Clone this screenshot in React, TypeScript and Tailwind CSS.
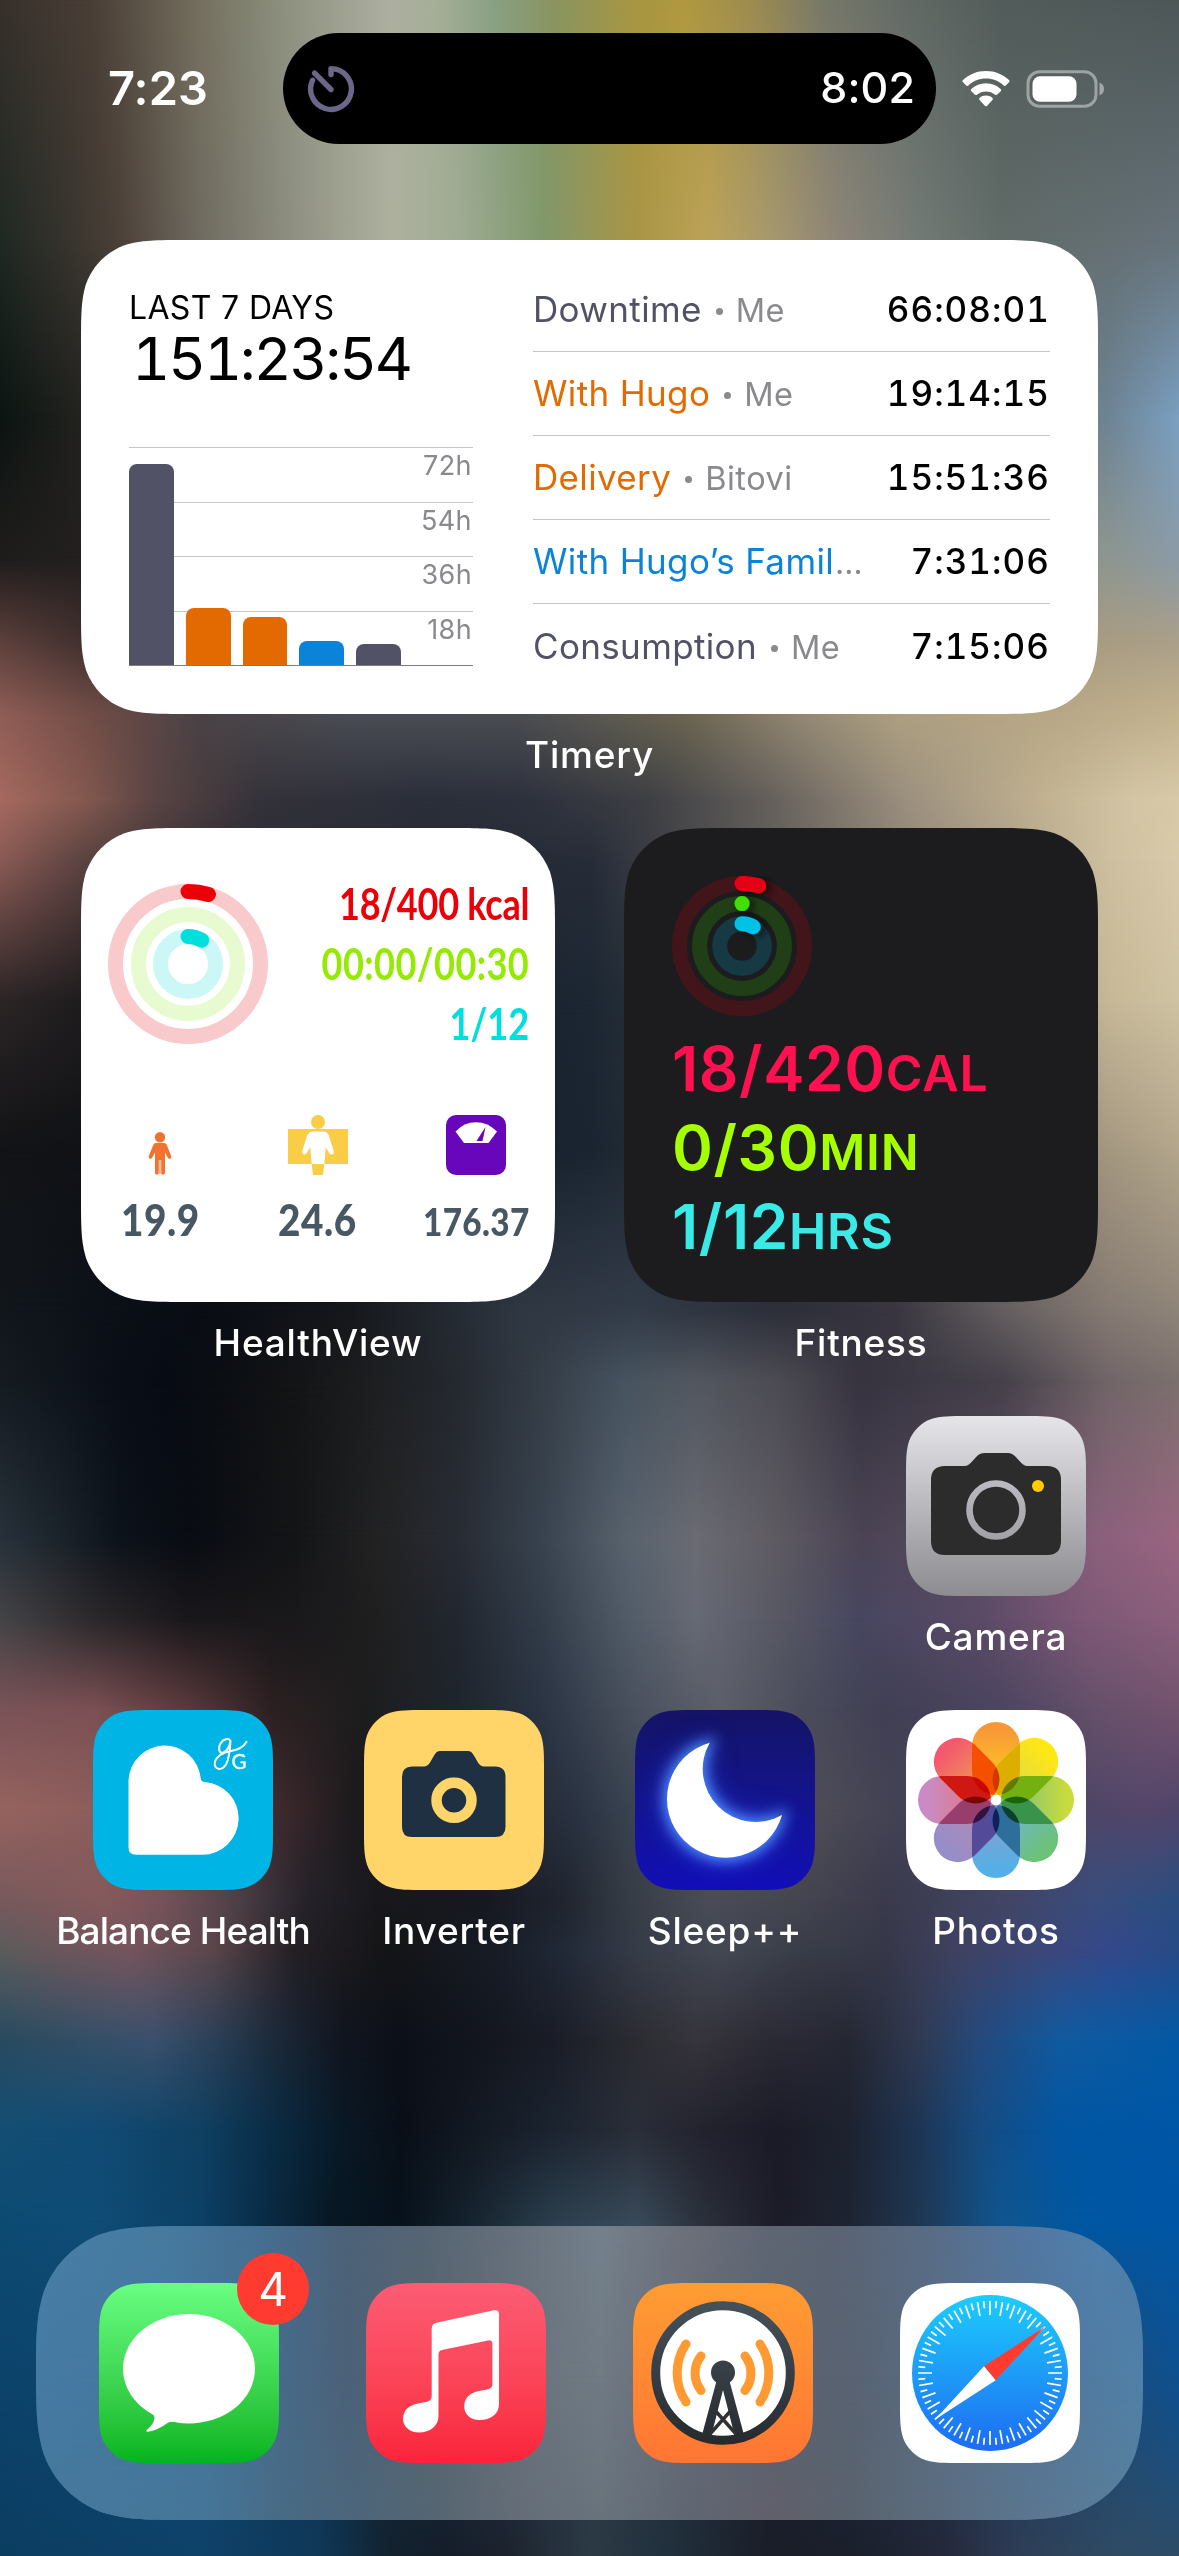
import React from "react";

type Row = { y: number; colors: string };

/* Wallpaper colour rows; neighbouring rows are cross-faded vertically. */
const WALLPAPER: Row[] = [
  { y: 0, colors: "#37302b 0%,#4a3f37 8%,#75705f 17%,#8d907f 24%,#adafa0 33%,#a5af98 37%,#88a083 42%,#8a9560 47%,#a89642 54%,#b0993f 58%,#9c8b50 64%,#777868 70%,#656c67 76%,#525c5a 85%,#4d5758 100%" },
  { y: 240, colors: "#1f2923 0%,#34322c 5%,#4b4038 10%,#6f6b60 17%,#8f9082 25%,#aeb09e 33%,#9fab93 39%,#80986c 46%,#a89545 54%,#bca258 60%,#a8996c 65%,#8d8578 71%,#727a75 78%,#616b68 85%,#66727a 100%" },
  { y: 420, colors: "#0b1411 0%,#23221f 7%,#4b4b46 30%,#6a6a60 60%,#6e8494 94%,#7ba0c2 100%" },
  { y: 560, colors: "#1f1d1c 0%,#231f1f 7%,#4b4b46 30%,#7a7568 60%,#8e9690 94%,#8b9aa6 100%" },
  { y: 640, colors: "#5c3f3b 0%,#40302e 7%,#4b4b46 30%,#7a7568 60%,#a89c82 94%,#aa9f8a 100%" },
  { y: 714, colors: "#8f5d56 0%,#704c46 8%,#4a4245 17%,#4a4d55 30%,#4b4d52 44%,#6a6450 58%,#938874 68%,#ac9f80 76%,#b8a888 90%,#c3b28e 100%" },
  { y: 800, colors: "#a5695f 0%,#84594f 7%,#5a4443 13%,#34323a 22%,#2a2e39 36%,#2c303c 44%,#3e3f44 55%,#635e5a 65%,#9c907f 77%,#c0b090 88%,#d3c5a5 96%,#d8c9a8 100%" },
  { y: 860, colors: "#8a5a54 0%,#5c4341 7%,#2c2c34 20%,#262c38 50%,#8a8072 75%,#cdbf9f 94%,#d8caaa 100%" },
  { y: 1000, colors: "#2c2526 0%,#1f1c1e 7%,#16181e 25%,#1c2733 50%,#5a5550 75%,#c6b897 94%,#cfc2a2 100%" },
  { y: 1150, colors: "#121316 0%,#101216 7%,#101318 25%,#1a2531 50%,#4a4745 75%,#a49780 94%,#b3a68c 100%" },
  { y: 1310, colors: "#12171c 0%,#0c1118 8%,#090c14 17%,#16181c 30%,#2f3742 44%,#323b48 54%,#2c2e38 66%,#393640 76%,#645e60 85%,#857a72 94%,#8f8478 100%" },
  { y: 1380, colors: "#151b21 0%,#0c1119 8%,#070b13 14%,#111315 24%,#1d1f21 32%,#252930 39%,#353d47 46%,#465360 53%,#52575f 59%,#4c4b53 66%,#36333f 73%,#45404a 85%,#716568 94%,#7c706e 100%" },
  { y: 1540, colors: "#28313a 0%,#1c242b 5%,#0d131b 10%,#090c13 16%,#141517 25%,#222223 32%,#282c34 39%,#38434f 46%,#57626d 53%,#6a6b73 59%,#5e5a62 66%,#4b4455 73%,#5a4a60 82%,#8a607c 93%,#9a6480 100%" },
  { y: 1620, colors: "#454447 0%,#2c282b 8%,#1a171b 16%,#19181a 25%,#1f1f20 32%,#222730 39%,#323c49 46%,#505a67 53%,#666a74 59%,#575863 66%,#474660 73%,#5a4a66 83%,#7d5876 92%,#8a5f7c 100%" },
  { y: 1710, colors: "#7a5358 0%,#7c5054 8%,#5b3a3c 16%,#2c2022 23%,#1d1d1e 31%,#1f252c 39%,#2a3443 46%,#4a515e 54%,#5c5f6a 61%,#4a4c5b 68%,#403f54 75%,#4c4560 85%,#65506a 93%,#73526e 100%" },
  { y: 1810, colors: "#96635f 0%,#8c5e5c 8%,#633f42 17%,#3c292d 24%,#1c1a1c 30%,#1b1c1f 38%,#2a3343 49%,#3f4854 55%,#53555e 62%,#4d4b56 70%,#424254 76%,#494564 88%,#54466a 97%,#50456a 100%" },
  { y: 1900, colors: "#77595c 0%,#85595c 9%,#75525a 14%,#4e4048 20%,#25222a 26%,#18181c 32%,#161820 41%,#20252f 48%,#353b44 53%,#494c56 60%,#44454f 68%,#3a3a4c 75%,#424564 85%,#384c7c 93%,#2a4d80 100%" },
  { y: 1950, colors: "#5a5c5c 0%,#6a575b 5%,#75555d 11%,#5a464b 18%,#241f25 25%,#141517 33%,#171c26 42%,#222a38 48%,#363c48 54%,#434853 61%,#393d48 68%,#363748 75%,#3f4160 81%,#3d4778 88%,#34488a 94%,#284b86 100%" },
  { y: 2040, colors: "#284a5f 0%,#344f68 8%,#3a506d 13%,#2b4058 18%,#1c2b3b 23%,#11151f 29%,#0c1018 34%,#14171f 42%,#1a1d27 47%,#2b2c32 54%,#36343c 59%,#2b2b35 65%,#252733 72%,#303a52 78%,#24497c 83%,#105a9f 90%,#0359a6 100%" },
  { y: 2130, colors: "#144e74 0%,#114b75 8%,#0f4062 17%,#0a2c45 23%,#091926 29%,#0a0f17 34%,#141a24 41%,#1b2430 47%,#2a2e38 54%,#22222d 60%,#1b1b27 66%,#1d222f 72%,#1d3554 78%,#164b80 83%,#0256a2 90%,#0057a6 100%" },
  { y: 2225, colors: "#0d4a72 0%,#0f4c76 8%,#0c4065 17%,#092a42 23%,#071825 28%,#07121c 34%,#16242f 40%,#2c3f4e 47%,#394a5a 54%,#2a2f39 60%,#1c1c28 66%,#1e2432 72%,#1f3752 78%,#10568f 85%,#0057a2 92%,#0056a5 100%" },
  { y: 2400, colors: "#0c426a 0%,#0d4870 17%,#10263a 33%,#2c3a46 50%,#1c1f2a 66%,#1e3656 83%,#1a4c7c 96%,#104f8c 100%" },
  { y: 2556, colors: "#0c3d61 0%,#0f4169 17%,#0f3858 27%,#13222f 33%,#151d2a 38%,#1c232e 43%,#2b3a45 50%,#20303c 57%,#1a1e29 65%,#1a1f2b 72%,#24283a 80%,#2e3c55 86%,#2f4a62 94%,#2e4c66 100%" },
];

const DOCK: Row[] = [
  { y: 0, colors: "#4880a8 0%,#467a9f 12%,#456f93 20%,#4c6278 28%,#566573 35%,#66707c 43%,#74818c 51%,#6c707b 59%,#5f6673 66%,#5a6473 72%,#5a6b84 80%,#5377a0 89%,#4f80ad 96%,#4c7ba8 100%" },
  { y: 150, colors: "#457aa3 0%,#45779d 12%,#466e90 20%,#4b6178 28%,#5a6670 37%,#6b747d 45%,#707a84 51%,#656a75 59%,#5b6470 66%,#596373 74%,#587088 83%,#52759a 90%,#5080a8 100%" },
  { y: 294, colors: "#47789c 0%,#45769a 15%,#486b85 22%,#4c657a 29%,#556672 36%,#636c77 43%,#68737c 51%,#5f6672 59%,#61606b 67%,#59646f 74%,#5c6d80 82%,#5b768f 90%,#58809c 100%" },
];

function ColorMesh({ rows }: { rows: Row[] }) {
  return (
    <div className="absolute inset-0">
      {rows.map((row, i) => {
        const prev = i === 0 ? row.y : rows[i - 1].y;
        const next = i === rows.length - 1 ? row.y + 1 : rows[i + 1].y;
        const mask = i === 0 ? undefined : `linear-gradient(to bottom, transparent 0, #000 ${row.y - prev}px)`;
        return (
          <div
            key={row.y}
            className="absolute inset-x-0"
            style={{
              top: prev,
              height: next - prev,
              backgroundImage: `linear-gradient(to right, ${row.colors})`,
              maskImage: mask,
              WebkitMaskImage: mask,
            }}
          />
        );
      })}
    </div>
  );
}

/* Continuous-corner rounded rectangle. */
function squircle(w: number, h: number, r: number): string {
  const ah = Math.min(1.52866 * r, w / 2);
  const av = Math.min(1.52866 * r, h / 2);
  const p = (n: number) => (n * r).toFixed(2);
  const X = (n: number) => (w - n * r).toFixed(2);
  const Y = (n: number) => (h - n * r).toFixed(2);
  const k1 = Math.min(1.0885, av / r);
  return [
    `M${ah} 0 L${w - ah} 0`,
    `C${X(1.0885)} 0 ${X(0.8684)} 0 ${X(0.6315)} ${p(0.0749)}`,
    `C${X(0.3728)} ${p(0.1691)} ${X(0.1691)} ${p(0.3728)} ${X(0.0749)} ${p(0.6315)}`,
    `C${w} ${p(0.8684)} ${w} ${p(k1)} ${w} ${av}`,
    `L${w} ${h - av}`,
    `C${w} ${Y(k1)} ${w} ${Y(0.8684)} ${X(0.0749)} ${Y(0.6315)}`,
    `C${X(0.1691)} ${Y(0.3728)} ${X(0.3728)} ${Y(0.1691)} ${X(0.6315)} ${Y(0.0749)}`,
    `C${X(0.8684)} ${h} ${X(1.0885)} ${h} ${w - ah} ${h}`,
    `L${ah} ${h}`,
    `C${p(1.0885)} ${h} ${p(0.8684)} ${h} ${p(0.6315)} ${Y(0.0749)}`,
    `C${p(0.3728)} ${Y(0.1691)} ${p(0.1691)} ${Y(0.3728)} ${p(0.0749)} ${Y(0.6315)}`,
    `C0 ${Y(0.8684)} 0 ${Y(k1)} 0 ${h - av}`,
    `L0 ${av}`,
    `C0 ${p(k1)} 0 ${p(0.8684)} ${p(0.0749)} ${p(0.6315)}`,
    `C${p(0.1691)} ${p(0.3728)} ${p(0.3728)} ${p(0.1691)} ${p(0.6315)} ${p(0.0749)}`,
    `C${p(0.8684)} 0 ${p(1.0885)} 0 ${ah} 0 Z`,
  ].join(" ");
}

const clip = (w: number, h: number, r: number) => ({ clipPath: `path("${squircle(w, h, r)}")` });

function Label({ children, className = "tracking-[0.8px]" }: { children: React.ReactNode; className?: string }) {
  return (
    <div className={`mt-[19px] h-[44px] whitespace-nowrap text-[37px] font-medium leading-[44px] text-white ${className}`}>
      {children}
    </div>
  );
}

/* ---------- status bar ---------- */

function StatusBar() {
  return (
    <header className="flex h-[240px] shrink-0 items-start pt-[33px] text-white">
      <div className="flex h-[111px] w-[283px] items-center pl-[108px] text-[47px] font-semibold tracking-[0.1px]">7:23</div>
      <div className="flex h-[111px] w-[653px] items-center justify-between rounded-full bg-black pl-[23px] pr-[21px]">
        <svg width="50" height="50" viewBox="0 0 50 50" fill="none" stroke="#6b6788" strokeWidth="5.4" strokeLinecap="round">
          <path d="M25 10.5V4.6A20.4 20.4 0 1 1 6.6 16.2" strokeLinejoin="round" />
          <path d="M8.6 9.2L25 25.5" />
        </svg>
        <span className="-mt-[2px] text-[43px] font-medium tracking-[0.1px]">8:02</span>
      </div>
      <div className="flex h-[111px] items-center pl-[26px]">
        <svg width="48" height="36" viewBox="0 0 48 36" fill="#fff">
          <path d="M24 0C33 0 41 3.400 47 8.900C47.700 9.600 47.700 10.500 47 11.200L43.800 14.500C43.200 15.100 42.300 15.100 41.600 14.500C36.900 10.200 30.800 7.600 24 7.600S11.100 10.200 6.400 14.500C5.700 15.100 4.800 15.100 4.200 14.500L1 11.200C.3 10.500 .3 9.600 1 8.900C7 3.400 15 0 24 0Z" />
          <path d="M24 12.300C29.600 12.300 34.700 14.400 38.600 17.900C39.300 18.500 39.300 19.500 38.700 20.200L35.300 23.600C34.700 24.200 33.800 24.200 33.100 23.700C30.600 21.600 27.500 20.400 24 20.400S17.400 21.600 14.900 23.700C14.200 24.200 13.300 24.200 12.700 23.600L9.300 20.200C8.700 19.500 8.700 18.500 9.400 17.900C13.300 14.400 18.400 12.300 24 12.300Z" />
          <path d="M24 24.600C26.400 24.600 28.600 25.400 30.300 26.800C31 27.400 31 28.300 30.400 29L25.200 34.700C24.500 35.400 23.500 35.400 22.800 34.700L17.600 29C17 28.300 17 27.400 17.700 26.800C19.400 25.400 21.600 24.600 24 24.600Z" />
        </svg>
        <svg className="ml-[16px]" width="79" height="38" viewBox="0 0 79 38">
          <rect x="2" y="1.800" width="68" height="34.400" rx="11.500" fill="none" stroke="#fff" strokeOpacity=".42" strokeWidth="3" />
          <path d="M73.500 12.500C76.500 13.800 78 16 78 19S76.500 24.200 73.500 25.500Z" fill="#fff" fillOpacity=".45" />
          <rect x="6.500" y="6.300" width="44" height="25.400" rx="7.500" fill="#fff" />
        </svg>
      </div>
    </header>
  );
}

/* ---------- Timery widget ---------- */

const BARS = [
  { h: 201, className: "w-[45px] bg-[#525266]" },
  { h: 57, className: "w-[45px] bg-[#e36a00]" },
  { h: 48, className: "w-[44px] bg-[#e36a00]" },
  { h: 24, className: "w-[45px] bg-[#0b83d9]" },
  { h: 21, className: "w-[45px] bg-[#525266]" },
];

const ENTRIES = [
  { name: "Downtime", sub: "Me", time: "66:08:01", color: "text-[#525266]" },
  { name: "With Hugo", sub: "Me", time: "19:14:15", color: "text-[#e36a00]" },
  { name: "Delivery", sub: "Bitovi", time: "15:51:36", color: "text-[#e36a00]" },
  { name: "With Hugo’s Famil", sub: "", time: "7:31:06", color: "text-[#0b83d9]" },
  { name: "Consumption", sub: "Me", time: "7:15:06", color: "text-[#525266]" },
];

function TimeryWidget() {
  return (
    <div className="flex h-[474px] w-[1017px] bg-white pl-[48px] pr-[48px]" style={clip(1017, 474, 69)}>
      <div className="w-[344px] pt-[48px]">
        <div className="text-[32px] leading-[40px] tracking-[0.35px] text-black">LAST 7 DAYS</div>
        <div className="-mt-[1px] pl-[3px] text-[59px] leading-[64px] tracking-[-2.3px] text-black tabular-nums">151:23:54</div>
        <div className="relative mt-[56px] h-[219px]">
          <div className="flex h-full flex-col">
            {["72h", "54h", "36h", "18h"].map((t) => (
              <div key={t} className="h-[54.5px] border-t border-[#c6c6c8] pr-[1px] text-right text-[27px] leading-[35px] tracking-[0.4px] text-[#8a8a8e]">
                {t}
              </div>
            ))}
          </div>
          <div className="absolute inset-0 flex items-end gap-[12px] border-b border-[#7c7c80]">
            {BARS.map((b, i) => (
              <div key={i} className={`rounded-t-[8px] ${b.className}`} style={{ height: b.h }} />
            ))}
          </div>
        </div>
      </div>
      <div className="ml-[60px] flex w-[517px] flex-col pt-[28px]">
        {ENTRIES.map((e, i) => (
          <div
            key={e.name}
            className={`flex h-[84px] items-center justify-between text-[35px] ${i < 4 ? "border-b border-[#c6c6c8]" : ""}`}
          >
            <div className="flex items-baseline whitespace-nowrap">
              <span className={`tracking-[0.35px] ${e.color}`}>{e.name}</span>
              {e.sub ? (
                <>
                  <span className="ml-[14px] mr-[13px] h-[7px] w-[7px] -translate-y-[7px] rounded-full bg-[#8a8a8e]" />
                  <span className="text-[32.5px] tracking-[0.5px] text-[#8a8a8e]">{e.sub}</span>
                </>
              ) : (
                <span className="pl-[1px] text-[32px] text-[#8a8a8e]">…</span>
              )}
            </div>
            <span className="font-medium tracking-[1.05px] text-black tabular-nums">{e.time}</span>
          </div>
        ))}
      </div>
    </div>
  );
}

/* ---------- activity rings ---------- */

type Ring = { r: number; track: string; color: string; deg: number };

function Rings({ size, rings, shadow }: { size: number; rings: Ring[]; shadow?: boolean }) {
  const c = size / 2;
  return (
    <svg width={size} height={size} viewBox={`0 0 ${size} ${size}`} fill="none" strokeWidth="15" strokeLinecap="round">
      <defs>
        <filter id={`ring-shadow-${size}`} filterUnits="userSpaceOnUse" x="0" y="0" width={size} height={size}>
          <feDropShadow dx="5" dy="2" stdDeviation="4" floodColor="#000" floodOpacity=".6" />
        </filter>
      </defs>
      {rings.map((g) => {
        const t = (g.deg * Math.PI) / 180;
        return (
          <g key={g.r}>
            <circle cx={c} cy={c} r={g.r} stroke={g.track} />
            {g.deg > 0 && (
              <path
                d={`M${c} ${c - g.r}A${g.r} ${g.r} 0 0 1 ${c + g.r * Math.sin(t)} ${c - g.r * Math.cos(t)}`}
                stroke={g.color}
                filter={shadow ? `url(#ring-shadow-${size})` : undefined}
              />
            )}
          </g>
        );
      })}
    </svg>
  );
}

/* ---------- HealthView widget ---------- */

function HealthWidget() {
  return (
    <div className="flex h-[474px] w-[474px] flex-col bg-white font-['Lato',sans-serif]" style={clip(474, 474, 69)}>
      <div className="flex justify-between pl-[27px] pr-[26px] pt-[46px]">
        <div className="pt-[10px]">
          <Rings
            size={160}
            rings={[
              { r: 72.5, track: "#f9cacc", color: "#ec0008", deg: 16.4 },
              { r: 49.5, track: "#e7fad0", color: "#94ea00", deg: 0 },
              { r: 27.5, track: "#ccf7f7", color: "#00dfdc", deg: 30 },
            ]}
          />
        </div>
        <div className="flex origin-right scale-x-[0.84] flex-col items-end whitespace-nowrap text-[43px] font-bold leading-[60px]">
          <span className="tracking-[-0.35px] text-[#ec0008]">18/400 kcal</span>
          <span className="tracking-[0.5px] text-[#94ea00]">00:00/00:30</span>
          <span className="text-[#00dfdc]">1/12</span>
        </div>
      </div>
      <div className="mt-[61px] flex h-[60px] items-end">
        <svg className="ml-[67px]" width="24" height="43" viewBox="0 0 24 43" fill="#f07430">
          <circle cx="12" cy="5.200" r="5.200" />
          <path d="M8 11H16Q17.800 11 18.800 13L23.200 24Q23.600 26 22.300 26.800Q20.800 27.400 19.900 25.800L17 20.500V41Q16.800 42.800 15 42.800Q13.400 42.800 13.200 41V28H10.800V41Q10.600 42.800 9 42.800Q7.200 42.800 7 41V20.500L4.100 25.800Q3.200 27.400 1.700 26.800Q.4 26 .8 24L5.200 13Q6.200 11 8 11Z" />
          <path d="M11 27H13V42H11Z" fillOpacity=".5" />
        </svg>
        <svg className="ml-[115px]" width="62" height="60" viewBox="0 0 62 60">
          <ellipse cx="31" cy="7" rx="7" ry="7" fill="#f9ce46" />
          <path d="M1 14H61V49H1Z" fill="#f9ce46" />
          <path d="M26 16.500H36Q40 16.500 41.800 20.500L46.800 36Q47.300 38.800 45 39.500Q43 39.800 42 37.800L38.800 32L37.300 49H24.700L23.200 32L20 37.800Q19 39.800 17 39.500Q14.700 38.800 15.200 36L20.200 20.500Q22 16.500 26 16.500Z" fill="#fff" />
          <path d="M24.700 49H37.300L36 60H26Z" fill="#f9ce46" />
        </svg>
        <svg className="ml-[97px]" width="60" height="60" viewBox="0 0 60 60">
          <rect width="60" height="60" rx="10" fill="#6706ba" />
          <path d="M9.500 16.500Q18 7.300 30 7.300T51 16.500L42.500 28H18Z" fill="#fff" />
          <path d="M39.500 12L36.500 26H30.500Z" fill="#6706ba" />
        </svg>
      </div>
      <div className="mt-[20px] flex h-[50px] items-baseline font-black leading-[50px] text-[#475763]">
        <span className="ml-[40px] w-[78px] origin-left scale-x-[0.9] text-[43px] tracking-[0.6px]">19.9</span>
        <span className="ml-[79px] w-[78px] origin-left scale-x-[0.9] text-[43px] tracking-[0.6px]">24.6</span>
        <span className="ml-[67px] w-[104px] origin-left scale-x-[0.9] text-[37px] tracking-[0.4px]">176.37</span>
      </div>
    </div>
  );
}

/* ---------- Fitness widget ---------- */

const GOALS = [
  { value: "18/420", unit: "CAL", color: "text-[#ff114f]" },
  { value: "0/30", unit: "MIN", color: "text-[#a6ff00]" },
  { value: "1/12", unit: "HRS", color: "text-[#3aeae6]" },
];

function FitnessWidget() {
  return (
    <div className="flex h-[474px] w-[474px] flex-col bg-[#1c1c1e] pl-[48px] pt-[48px]" style={clip(474, 474, 69)}>
      <Rings
        size={140}
        shadow
        rings={[
          { r: 62.5, track: "#42151a", color: "#e60519", deg: 15.4 },
          { r: 42.4, track: "#213f16", color: "#3fdf00", deg: 0.2 },
          { r: 22.3, track: "#163a44", color: "#00c2e6", deg: 30 },
        ]}
      />
      <div className="mt-[13px] flex flex-col font-semibold">
        {GOALS.map((g) => (
          <div key={g.unit} className={`flex h-[79px] items-baseline leading-[79px] ${g.color}`}>
            <span className="text-[62px] leading-[79px] tracking-[0.6px]">{g.value}</span>
            <span className="text-[50px] leading-none tracking-[0.8px]">{g.unit}</span>
          </div>
        ))}
      </div>
    </div>
  );
}

/* ---------- app icons (180 x 180) ---------- */

function Icon({ className, children }: { className: string; children: React.ReactNode }) {
  return (
    <div className={`h-[180px] w-[180px] shrink-0 ${className}`} style={clip(180, 180, 40)}>
      <svg width="180" height="180" viewBox="0 0 180 180" fill="none">
        {children}
      </svg>
    </div>
  );
}

function CameraIcon() {
  return (
    <Icon className="bg-linear-to-b from-[#e6e5ea] to-[#8d8d91]">
      <defs>
        <linearGradient id="lens" x1="0" y1="64" x2="0" y2="124" gradientUnits="userSpaceOnUse">
          <stop stopColor="#bcbbc1" />
          <stop offset="1" stopColor="#a2a1a6" />
        </linearGradient>
      </defs>
      <path d="M39 50H58C62 50 64 48 67 44.500C71 40 73 37 79 37H101C107 37 109 40 113 44.500C116 48 118 50 122 50H141Q155 50 155 64V125Q155 139 141 139H39Q25 139 25 125V64Q25 50 39 50Z" fill="#2c2c2c" />
      <circle cx="90" cy="94" r="26.500" stroke="url(#lens)" strokeWidth="6.600" />
      <circle cx="132" cy="70" r="6" fill="#ffcc00" />
    </Icon>
  );
}

function BalanceIcon() {
  return (
    <Icon className="bg-[#00b4e5]">
      <path d="M35.500 71A36.200 36.200 0 0 1 107.700 68Q108 72 112 72A36.300 36.400 0 0 1 109 144.700H43Q35.500 144.700 35.500 137.200Z" fill="#fff" />
      <path d="M137.500 31C136 28 130.500 28.300 127.500 33.500C124.500 39 126.500 44 130.500 42.500C134 41 136.500 36 137.500 31C137 40 136 49 133 54.500C130 59.500 124.500 60.500 122.300 56.500C120 51 125 45 132 42.500C141 40 149.500 39.500 153.500 31.800" stroke="#fff" strokeWidth="2" strokeLinecap="round" strokeLinejoin="round" />
      <text x="138.500" y="59" fill="#fff" fontFamily="Lato, sans-serif" fontWeight="400" stroke="#fff" strokeWidth=".4" fontSize="20.500">G</text>
    </Icon>
  );
}

function InverterIcon() {
  return (
    <Icon className="bg-[#ffd469]">
      <g className="blur-[0.7px]">
        <path d="M48 56.500H60C65 56.500 66.500 51 69.500 46.500C72 42 73.500 41 77 41H103C106.500 41 108 42 110.500 46.500C113.500 51 115 56.500 120 56.500H131Q141.500 56.500 141.500 67V117Q141.500 127 131 127H48Q38 127 38 117V67Q38 56.500 48 56.500Z" fill="#1f3042" />
        <circle cx="90" cy="90.300" r="17.500" stroke="#ffd469" strokeWidth="10.500" />
      </g>
    </Icon>
  );
}

function SleepIcon() {
  const moon = "M74.7 32.7A58.6 58.6 0 1 0 147 105A53 53 0 0 1 74.7 32.7Z";
  return (
    <Icon className="bg-linear-to-b from-[#141366] to-[#120eb8]">
      <defs>
        <filter id="glow-wide" x="-50%" y="-50%" width="200%" height="200%">
          <feGaussianBlur stdDeviation="16" />
        </filter>
        <filter id="glow" x="-50%" y="-50%" width="200%" height="200%">
          <feGaussianBlur stdDeviation="7" />
        </filter>
      </defs>
      <path d={moon} fill="#2b50f0" opacity=".65" filter="url(#glow-wide)" />
      <path d={moon} fill="#4f8cff" stroke="#4f8cff" strokeWidth="7" filter="url(#glow)" />
      <path d={moon} fill="#fff" />
    </Icon>
  );
}

/* outer colour, inner colour, colour where the petal overlaps the next one */
const PETALS: [string, string, string][] = [
  ["#f79838", "#ffc820", "#dcae00"],
  ["#ffe713", "#dfd84a", "#74b010"],
  ["#c8dc3c", "#84c474", "#39934b"],
  ["#6cc276", "#6fb6d2", "#2d6f9a"],
  ["#52b0e6", "#86a0d2", "#544a9a"],
  ["#958ec8", "#b488b4", "#973e6c"],
  ["#c98bc6", "#e07884", "#d01812"],
  ["#f4586e", "#f09a50", "#f55000"],
];

function PhotosIcon() {
  return (
    <Icon className="bg-white">
      <defs>
        {PETALS.map(([a, b], i) => (
          <React.Fragment key={i}>
            <linearGradient id={`petal-${i}`} x1="0" y1="0" x2="0" y2="1">
              <stop offset=".1" stopColor={a} />
              <stop offset=".8" stopColor={b} />
            </linearGradient>
            <clipPath id={`petal-clip-${i}`}>
              <rect x="66" y="12" width="48" height="73" rx="24" transform={`rotate(${i * 45} 90 90)`} />
            </clipPath>
          </React.Fragment>
        ))}
      </defs>
      {PETALS.map((_, i) => (
        <rect key={i} x="66" y="12" width="48" height="73" rx="24" fill={`url(#petal-${i})`} transform={`rotate(${i * 45} 90 90)`} />
      ))}
      <g className="isolate">
        {PETALS.map(([, , overlap], i) => (
          <g key={i} clipPath={`url(#petal-clip-${i})`} className="mix-blend-multiply">
            <rect x="66" y="12" width="48" height="73" rx="24" fill={overlap} transform={`rotate(${(i + 1) * 45} 90 90)`} />
          </g>
        ))}
      </g>
      <circle cx="90" cy="90" r="5" fill="#fff" />
    </Icon>
  );
}

function MessagesIcon() {
  return (
    <div className="relative">
      <Icon className="bg-linear-to-b from-[#68ff82] to-[#00b41c]">
        <ellipse cx="90" cy="85.700" rx="66" ry="54.700" fill="#fff" />
        <path d="M44 124L53.500 131Q56.500 133.500 55 137.500C53.500 141.500 50.500 145 47.500 147.300Q46.500 148.700 48.500 148.700C57 147.800 63.500 143.500 68.500 140Q71 138.400 74 138.800L86 140L80 110Z" fill="#fff" />
      </Icon>
      <span className="absolute -top-[30px] left-[138px] flex h-[72px] w-[72px] items-center justify-center rounded-full bg-[#ff3b30] text-[46px] text-white">4</span>
    </div>
  );
}

function MusicIcon() {
  return (
    <Icon className="bg-linear-to-b from-[#fc5c74] to-[#fa233b]">
      <path d="M65.700 46Q65.700 40.900 70.500 39.800L128 27.300Q133 26.300 133 31.500V121C133 131 125 137 113.500 137C104 137 98.200 131 98.200 123.500C98.200 115 104 110 112 108.300L122 106.300Q126.400 105.300 126.400 101V61Q126.400 56.500 122 57.400L76 67Q72.500 67.800 72.500 71.500V133C72.500 143 64 149.500 53 149.500C43.500 149.500 37 143.500 37 136C37 127.500 43 122.500 51 120.800L61 118.800Q65.700 117.800 65.700 113Z" fill="#fff" />
    </Icon>
  );
}

function OvercastIcon() {
  return (
    <Icon className="bg-linear-to-b from-[#ff9c33] to-[#ff7533]">
      <defs>
        <linearGradient id="tower" x1="0" y1="18" x2="0" y2="162" gradientUnits="userSpaceOnUse">
          <stop stopColor="#46525b" />
          <stop offset="1" stopColor="#262a2e" />
        </linearGradient>
      </defs>
      <circle cx="90" cy="90" r="67.300" fill="#fff" stroke="url(#tower)" strokeWidth="9" />
      <g stroke="#ff9a33" strokeWidth="9" strokeLinecap="round">
        <path d="M53 61A52 52 0 0 0 53 119M68 73A28 28 0 0 0 68 107.500M127 61A52 52 0 0 1 127 119M112 73A28 28 0 0 1 112 107.500" />
      </g>
      <circle cx="90" cy="89.500" r="12" fill="url(#tower)" />
      <path d="M83.500 98H96.500L111 152H101.500L90 107L78.500 152H69Z" fill="url(#tower)" />
      <path d="M83 128.500L103 151M97 128.500L77 151" stroke="#2c3136" strokeWidth="3.400" />
    </Icon>
  );
}

function SafariIcon() {
  return (
    <Icon className="bg-white">
      <defs>
        <linearGradient id="dial" x1="0" y1="12" x2="0" y2="168" gradientUnits="userSpaceOnUse">
          <stop stopColor="#1ccdfd" />
          <stop offset="1" stopColor="#1e6bf1" />
        </linearGradient>
      </defs>
      <circle cx="90" cy="90" r="78" fill="url(#dial)" />
      <g stroke="#fff" strokeWidth="1.700">
        {Array.from({ length: 72 }, (_, i) => (
          <path key={i} d={i % 2 ? "M90 18V25" : "M90 18V32"} transform={`rotate(${i * 5} 90 90)`} />
        ))}
      </g>
      <path d="M145.500 43.200L84 83.300L95.700 97.300Z" fill="#ff3b30" />
      <path d="M34.800 136.800L84 83.300L95.700 97.300Z" fill="#fff" />
    </Icon>
  );
}

function HomeApp({ icon, name, className = "", tight }: { icon: React.ReactNode; name: string; className?: string; tight?: boolean }) {
  return (
    <div className={`flex w-[180px] flex-col items-center ${className}`}>
      {icon}
      {tight ? <Label className="tracking-[-0.9px]">{name}</Label> : <Label>{name}</Label>}
    </div>
  );
}

export default function App() {
  return (
    <main className="relative h-[2556px] w-[1179px] overflow-hidden bg-black font-['Inter','Liberation_Sans',sans-serif]">
      <ColorMesh rows={WALLPAPER} />
      <div className="relative flex h-full flex-col">
        <StatusBar />
        <section className="flex h-[588px] shrink-0 flex-col items-center">
          <TimeryWidget />
          <Label>Timery</Label>
        </section>
        <section className="flex h-[588px] shrink-0 justify-between px-[81px]">
          <div className="flex flex-col items-center">
            <HealthWidget />
            <Label>HealthView</Label>
          </div>
          <div className="flex flex-col items-center">
            <FitnessWidget />
            <Label>Fitness</Label>
          </div>
        </section>
        <section className="grid h-[588px] shrink-0 auto-rows-[294px] grid-cols-[repeat(4,180px)] gap-x-[91px] pl-[93px]">
          <HomeApp icon={<CameraIcon />} name="Camera" className="col-start-4" />
          <HomeApp icon={<BalanceIcon />} name="Balance Health" className="col-start-1" tight />
          <HomeApp icon={<InverterIcon />} name="Inverter" />
          <HomeApp icon={<SleepIcon />} name="Sleep++" />
          <HomeApp icon={<PhotosIcon />} name="Photos" />
        </section>
        <nav className="relative mx-[36px] mt-auto mb-[36px] h-[294px] w-[1107px] shrink-0">
          <div className="absolute inset-0" style={clip(1107, 294, 104)}>
            <ColorMesh rows={DOCK} />
          </div>
          <div className="relative flex gap-[87px] pl-[63px] pt-[57px]">
            <MessagesIcon />
            <MusicIcon />
            <OvercastIcon />
            <SafariIcon />
          </div>
        </nav>
      </div>
    </main>
  );
}
